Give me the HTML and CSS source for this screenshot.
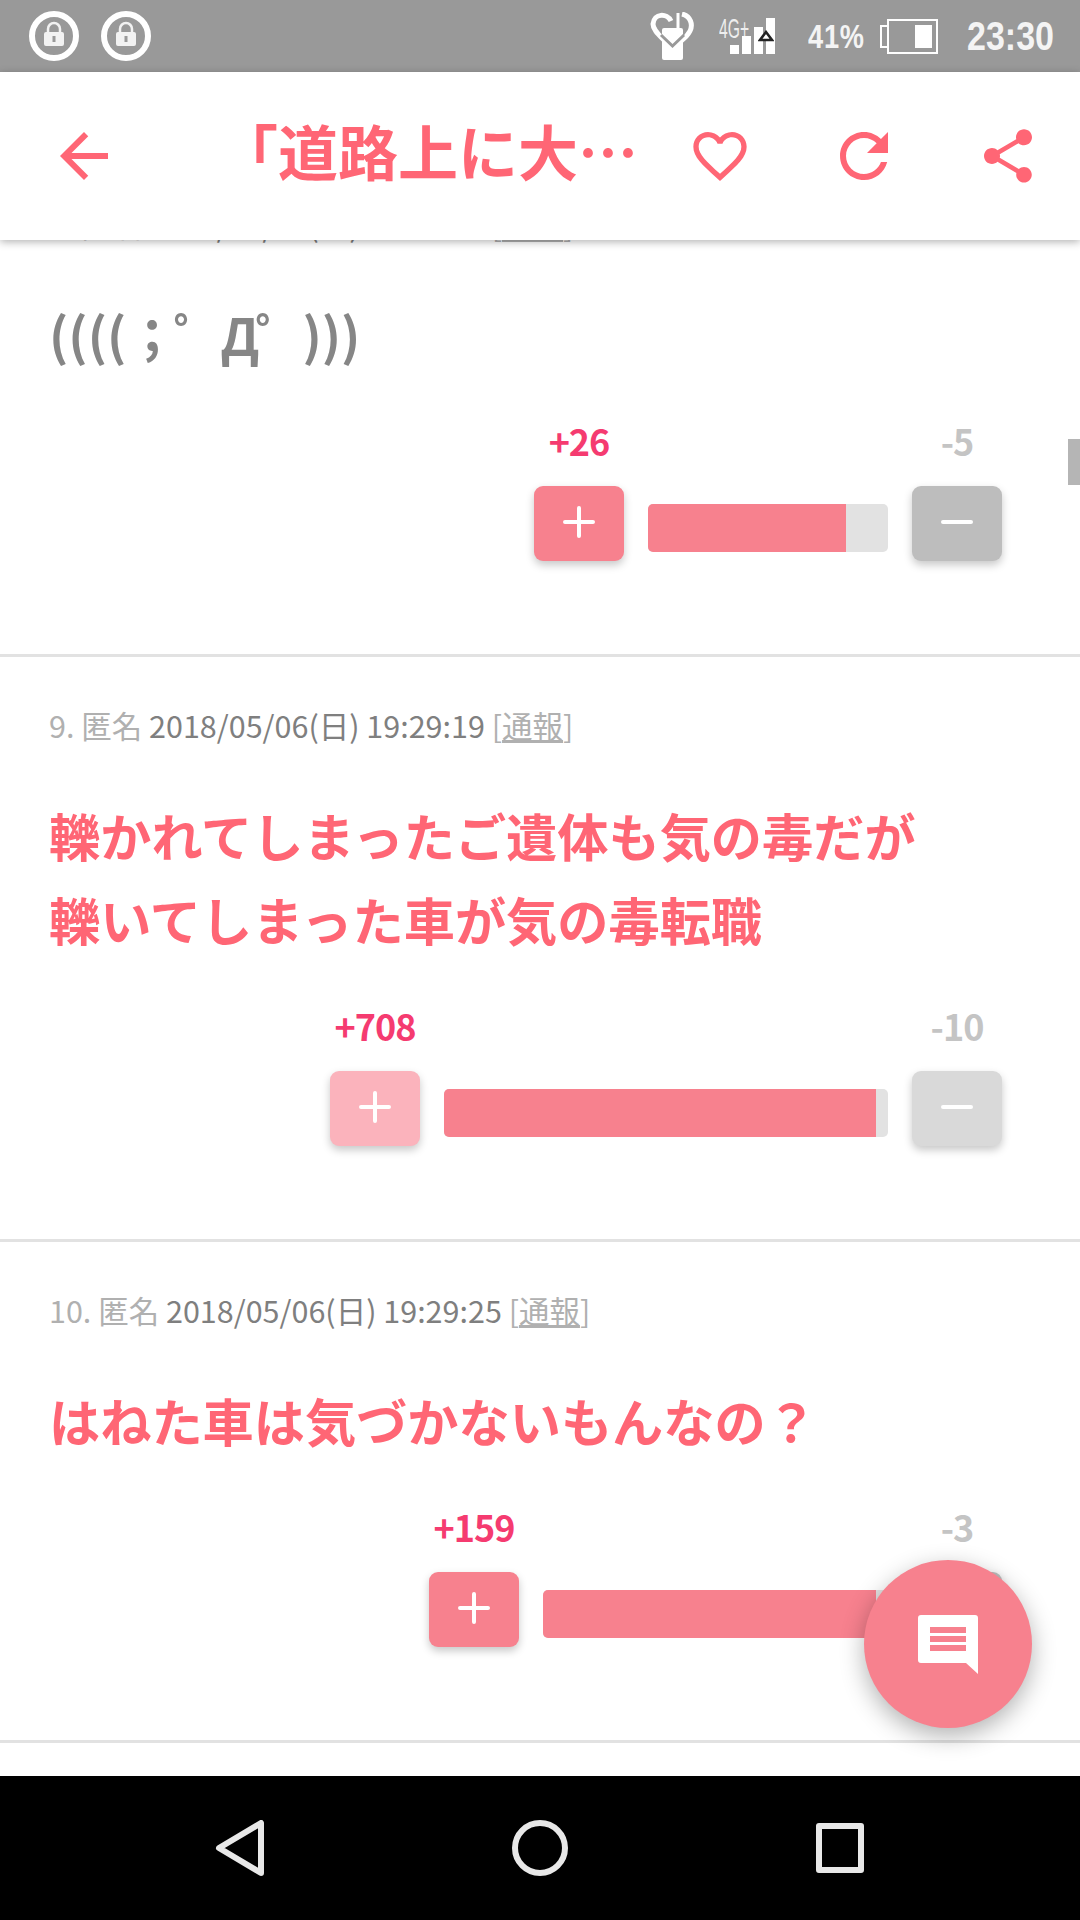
FILE: index.html
```html
<!DOCTYPE html>
<html lang="ja">
<head>
    <meta charset="utf-8">
    <meta name="viewport" content="width=device-width, initial-scale=1">
    <title>「道路上に大…</title>
    <link rel="stylesheet" href="styles.css">
</head>
<body>
    <div class="status-bar">
        <svg class="lock" viewBox="0 0 50 50">
            <circle cx="25" cy="25" r="22" fill="none" stroke="#fff" stroke-width="6"/>
            <path d="M19 21v-3a6 6 0 0 1 12 0v3" fill="none" stroke="#f2f2f2" stroke-width="2.5"/>
            <path fill="#f2f2f2" fill-rule="evenodd" d="M17 21h16a2 2 0 0 1 2 2v10a2 2 0 0 1-2 2H17a2 2 0 0 1-2-2V23a2 2 0 0 1 2-2zM23.500 25v6h3v-6z"/>
        </svg>
        <svg class="lock lock-second" viewBox="0 0 50 50">
            <circle cx="25" cy="25" r="22" fill="none" stroke="#fff" stroke-width="6"/>
            <path d="M19 21v-3a6 6 0 0 1 12 0v3" fill="none" stroke="#f2f2f2" stroke-width="2.5"/>
            <path fill="#f2f2f2" fill-rule="evenodd" d="M17 21h16a2 2 0 0 1 2 2v10a2 2 0 0 1-2 2H17a2 2 0 0 1-2-2V23a2 2 0 0 1 2-2zM23.500 25v6h3v-6z"/>
        </svg>
        <svg class="health" viewBox="0 0 45 48">
            <path d="M21 9C17 1 4 1 3 12c0 6 6 11 11 16" fill="none" stroke="#fff" stroke-width="5"/>
            <path d="M32 2c9 2 11 11 8 17-2 4-5 7-9 10" fill="none" stroke="#fff" stroke-width="5"/>
            <path d="M28 1v16" stroke="#fff" stroke-width="3"/>
            <rect x="12" y="16" width="21" height="32" rx="2" fill="#fff"/>
            <path d="M11 23l11.500 11L34 23" fill="none" stroke="#999" stroke-width="3"/>
        </svg>
        <div class="signal">
            <span class="network">4G+</span>
            <i class="signal-bar bar-1"></i>
            <i class="signal-bar bar-2"></i>
            <i class="signal-bar bar-3"></i>
            <i class="signal-bar bar-4"></i>
            <svg class="roaming" viewBox="0 0 16 12">
                <path d="M8 2L2 10h12z" fill="#fff" stroke="#222" stroke-width="2.500"/>
            </svg>
        </div>
        <span class="battery-text">41%</span>
        <div class="battery">
            <i class="battery-cap"></i>
            <div class="battery-body"><i class="battery-level"></i></div>
        </div>
        <span class="clock">23:30</span>
    </div>

    <header class="toolbar">
        <svg class="icon icon-back" viewBox="0 0 24 24"><path d="M20 11H7.830l5.590-5.590L12 4l-8 8 8 8 1.410-1.410L7.830 13H20v-2z"/></svg>
        <h1 class="page-title">「道路上に大…</h1>
        <svg class="icon icon-heart" viewBox="0 0 24 24"><path d="M16.500 3c-1.740 0-3.410.81-4.500 2.090C10.910 3.810 9.240 3 7.500 3 4.420 3 2 5.420 2 8.500c0 3.780 3.400 6.860 8.550 11.540L12 21.350l1.450-1.320C18.600 15.360 22 12.280 22 8.500 22 5.420 19.580 3 16.500 3zm-4.400 15.550l-.1.100-.1-.1C7.140 14.240 4 11.390 4 8.500 4 6.500 5.500 5 7.500 5c1.540 0 3.040.99 3.570 2.360h1.870C13.460 5.990 14.960 5 16.500 5c2 0 3.500 1.500 3.500 3.500 0 2.890-3.140 5.740-7.900 10.050z"/></svg>
        <svg class="icon icon-refresh" viewBox="0 0 24 24"><path d="M17.650 6.350C16.200 4.900 14.210 4 12 4c-4.420 0-7.990 3.580-7.990 8s3.570 8 7.990 8c3.730 0 6.840-2.550 7.730-6h-2.080c-.82 2.330-3.040 4-5.650 4-3.310 0-6-2.690-6-6s2.690-6 6-6c1.660 0 3.140.69 4.220 1.780L13 11h7V4l-2.350 2.350z"/></svg>
        <svg class="icon icon-share" viewBox="0 0 24 24"><path d="M18 16.080c-.76 0-1.440.3-1.960.77L8.910 12.700c.05-.23.09-.46.09-.7s-.04-.47-.09-.7l7.050-4.110c.54.5 1.250.81 2.040.81 1.660 0 3-1.340 3-3s-1.340-3-3-3-3 1.340-3 3c0 .24.04.47.09.7L8.040 9.810C7.500 9.310 6.790 9 6 9c-1.660 0-3 1.340-3 3s1.340 3 3 3c.79 0 1.500-.31 2.040-.81l7.120 4.160c-.05.21-.08.43-.08.65 0 1.610 1.310 2.920 2.920 2.920s2.920-1.310 2.920-2.920-1.310-2.920-2.920-2.920z"/></svg>
    </header>

    <main class="content">
        <div class="comments">
            <article class="comment">
                <p class="meta"><span class="meta-name">8. 匿名</span> 2018/05/06(日) 19:28:58 <span class="meta-report">[<u>通報</u>]</span></p>
                <p class="body body-grey">((((<span class="face">；゜Д゜</span>)))</p>
                <div class="votes">
                    <div class="vote">
                        <span class="count count-plus">+26</span>
                        <button class="vote-btn btn-plus"><svg class="vote-icon" viewBox="0 0 32 32"><path d="M16 2v28M2 16h28"/></svg></button>
                    </div>
                    <div class="ratio" style="width: 240px"><div class="ratio-fill" style="width: 82.5%"></div></div>
                    <div class="vote">
                        <span class="count count-minus">-5</span>
                        <button class="vote-btn btn-minus"><svg class="vote-icon" viewBox="0 0 32 32"><path d="M2 16h28"/></svg></button>
                    </div>
                </div>
            </article>

            <article class="comment">
                <p class="meta"><span class="meta-name">9. 匿名</span> 2018/05/06(日) 19:29:19 <span class="meta-report">[<u>通報</u>]</span></p>
                <p class="body">轢かれてしまったご遺体も気の毒だが<br>轢いてしまった車が気の毒転職</p>
                <div class="votes">
                    <div class="vote">
                        <span class="count count-plus">+708</span>
                        <button class="vote-btn btn-plus is-faded"><svg class="vote-icon" viewBox="0 0 32 32"><path d="M16 2v28M2 16h28"/></svg></button>
                    </div>
                    <div class="ratio" style="width: 444px"><div class="ratio-fill" style="width: 97.3%"></div></div>
                    <div class="vote">
                        <span class="count count-minus">-10</span>
                        <button class="vote-btn btn-minus is-faded"><svg class="vote-icon" viewBox="0 0 32 32"><path d="M2 16h28"/></svg></button>
                    </div>
                </div>
            </article>

            <article class="comment">
                <p class="meta"><span class="meta-name">10. 匿名</span> 2018/05/06(日) 19:29:25 <span class="meta-report">[<u>通報</u>]</span></p>
                <p class="body">はねた車は気づかないもんなの？</p>
                <div class="votes">
                    <div class="vote">
                        <span class="count count-plus">+159</span>
                        <button class="vote-btn btn-plus"><svg class="vote-icon" viewBox="0 0 32 32"><path d="M16 2v28M2 16h28"/></svg></button>
                    </div>
                    <div class="ratio" style="width: 345px"><div class="ratio-fill" style="width: 96.5%"></div></div>
                    <div class="vote">
                        <span class="count count-minus">-3</span>
                        <button class="vote-btn btn-minus"><svg class="vote-icon" viewBox="0 0 32 32"><path d="M2 16h28"/></svg></button>
                    </div>
                </div>
            </article>
        </div>

        <div class="scroll-thumb"></div>

        <button class="fab">
            <svg class="fab-icon" viewBox="0 0 60 59">
                <path fill="#fff" d="M3 0h54a3 3 0 0 1 3 3v56L48 48H3a3 3 0 0 1-3-3V3a3 3 0 0 1 3-3z"/>
                <path fill="#f7818e" d="M12 12h36v6H12zM12 21h36v6H12zM12 30h36v6H12z"/>
            </svg>
        </button>
    </main>

    <nav class="nav-bar">
        <svg class="nav-back" viewBox="0 0 50 56"><path d="M46 3v50L4 28z"/></svg>
        <i class="nav-home"></i>
        <i class="nav-recent"></i>
    </nav>
</body>
</html>
```

FILE: styles.css
```css
* {
  box-sizing: border-box;
}

html, body {
  margin: 0;
  height: 100%;
}

body {
  width: 1080px;
  height: 1920px;
  display: flex;
  flex-direction: column;
  overflow: hidden;
  background: #fff;
  font-family: "Noto Sans CJK JP", "Noto Sans", sans-serif;
}

/* status bar */
.status-bar {
  height: 72px;
  flex: none;
  display: flex;
  align-items: center;
  padding-left: 29px;
  background: #999;
  color: #fff;
}
.lock {
  width: 50px;
  height: 50px;
}
.lock-second {
  margin-left: 22px;
}
.health {
  width: 45px;
  height: 48px;
  margin-left: auto;
}
.signal {
  position: relative;
  width: 56px;
  height: 36px;
  margin-left: 24px;
  display: flex;
  align-items: flex-end;
  justify-content: flex-end;
  gap: 3px;
}
.network {
  position: absolute;
  left: 0;
  top: -3px;
  font-family: "Liberation Sans", sans-serif;
  font-size: 28px;
  line-height: 28px;
  white-space: nowrap;
  color: #eee;
  transform: scaleX(0.56);
  transform-origin: left;
}
.signal-bar {
  width: 9px;
  background: #fff;
}
.bar-1 { height: 9px; }
.bar-2 { height: 18px; }
.bar-3 { height: 27px; }
.bar-4 { height: 36px; }
.roaming {
  position: absolute;
  right: 1px;
  top: 12px;
  width: 16px;
  height: 12px;
}
.battery-text {
  margin-left: 33px;
  width: 57px;
  font-family: "Liberation Sans", sans-serif;
  font-weight: 700;
  font-size: 34px;
  letter-spacing: 1px;
  white-space: nowrap;
  color: #f4f4f4;
  transform: scaleX(0.8);
  transform-origin: left;
}
.battery {
  margin-left: 15px;
  width: 58px;
  height: 35px;
  display: flex;
  align-items: center;
}
.battery-cap {
  width: 7px;
  height: 23px;
  border: 2px solid #fff;
  border-right: 0;
}
.battery-body {
  flex: 1;
  height: 35px;
  border: 2px solid #fff;
  padding: 4px;
  display: flex;
  justify-content: flex-end;
}
.battery-level {
  width: 17px;
  background: #fff;
}
.clock {
  margin-left: 29px;
  margin-right: 27px;
  width: 86px;
  font-family: "Liberation Sans", sans-serif;
  font-weight: 700;
  font-size: 41px;
  white-space: nowrap;
  color: #f4f4f4;
  transform: scaleX(0.83);
  transform-origin: left;
}

/* toolbar */
.toolbar {
  position: relative;
  z-index: 2;
  height: 168px;
  flex: none;
  display: flex;
  align-items: center;
  background: #fff;
  box-shadow: 0 2px 8px rgba(0, 0, 0, 0.3);
}
.icon {
  flex: none;
  fill: #ff6675;
}
.icon-back {
  width: 72px;
  height: 72px;
  margin-left: 48px;
}
.page-title {
  width: 420px;
  margin: 0 0 0 98px;
  padding-bottom: 12px;
  font-size: 60px;
  line-height: 84px;
  font-weight: 700;
  white-space: nowrap;
  color: #ff6675;
}
.icon-heart {
  width: 64px;
  height: 64px;
  margin-left: 50px;
}
.icon-refresh {
  width: 72px;
  height: 72px;
  margin-left: 76px;
}
.icon-share {
  width: 64px;
  height: 64px;
  margin-left: 76px;
}

/* comment list */
.content {
  position: relative;
  flex: 1;
  overflow: hidden;
}
.comments {
  margin-top: -84px;
}
.comment {
  padding: 46px 78px 93px 49px;
  border-bottom: 3px solid #e2e2e2;
}
.meta {
  margin: 0;
  font-size: 30.5px;
  line-height: 44px;
  color: #7f7f7f;
}
.meta-name,
.meta-report {
  color: #b0b0b0;
}
.body {
  margin: 46px 0 0;
  font-size: 51.2px;
  line-height: 84px;
  font-weight: 700;
  color: #ff6675;
}
.body-grey {
  color: #868686;
}
.face {
  letter-spacing: -4px;
}
.votes {
  margin-top: 42px;
  display: flex;
  justify-content: flex-end;
  align-items: flex-end;
  gap: 24px;
}
.vote {
  width: 90px;
  display: flex;
  flex-direction: column;
  align-items: center;
}
.count {
  font-size: 36px;
  line-height: 44px;
  font-weight: 700;
  letter-spacing: -1px;
  white-space: nowrap;
  margin-bottom: 24px;
}
.count-plus {
  color: #f53b70;
}
.count-minus {
  color: #c4c4c4;
}
.vote-btn {
  width: 90px;
  height: 75px;
  padding: 0 0 4px;
  border: 0;
  border-radius: 9px;
  display: flex;
  align-items: center;
  justify-content: center;
  box-shadow: 0 4px 8px rgba(0, 0, 0, 0.22);
}
.btn-plus {
  background: #f7818e;
}
.btn-minus {
  background: #bdbdbd;
}
.btn-plus.is-faded {
  background: #fbb3bc;
}
.btn-minus.is-faded {
  background: #d9d9d9;
}
.vote-icon {
  width: 32px;
  height: 32px;
  fill: none;
  stroke: #fff;
  stroke-width: 4;
  stroke-linecap: round;
}
.ratio {
  height: 48px;
  margin-bottom: 9px;
  border-radius: 5px;
  overflow: hidden;
  background: #e2e2e2;
}
.ratio-fill {
  height: 100%;
  background: #f7818e;
}

/* things floating over the list */
.scroll-thumb {
  position: absolute;
  top: 199px;
  right: 0;
  width: 12px;
  height: 46px;
  background: #b5b5b5;
}
.fab {
  position: absolute;
  right: 48px;
  bottom: 48px;
  width: 168px;
  height: 168px;
  padding: 0;
  border: 0;
  border-radius: 50%;
  display: flex;
  align-items: center;
  justify-content: center;
  background: #f7818e;
  box-shadow: 0 8px 24px rgba(0, 0, 0, 0.3);
}
.fab-icon {
  width: 60px;
  height: 59px;
}

/* navigation bar */
.nav-bar {
  position: relative;
  z-index: 3;
  height: 144px;
  flex: none;
  display: flex;
  align-items: center;
  background: #000;
}
.nav-back {
  width: 50px;
  height: 56px;
  margin-left: 215px;
  fill: none;
  stroke: #e8e8e8;
  stroke-width: 6;
  stroke-linejoin: round;
}
.nav-home {
  width: 56px;
  height: 56px;
  margin-left: 247px;
  border: 6px solid #e8e8e8;
  border-radius: 50%;
}
.nav-recent {
  width: 48px;
  height: 50px;
  margin-left: 248px;
  border: 6px solid #e8e8e8;
  border-radius: 3px;
}
```
